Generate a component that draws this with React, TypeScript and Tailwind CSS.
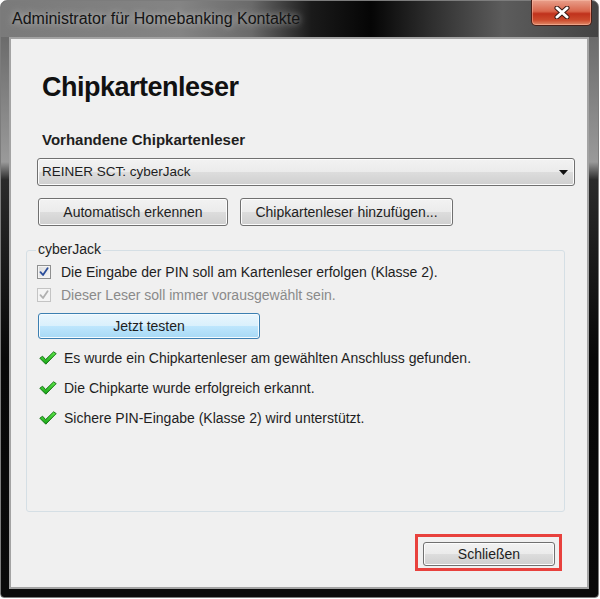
import React from 'react';

const btn =
  'flex items-center justify-center rounded-[3px] border border-[#707070] bg-[linear-gradient(180deg,#f2f2f2_0%,#ebebeb_50%,#dddddd_50%,#cfcfcf_100%)] shadow-[inset_0_0_0_1px_#fcfcfc] text-[14px] text-[#1e1e1e]';

const GreenCheck = () => (
  <svg width="18" height="14" viewBox="0 0 18 14" className="shrink-0">
    <defs>
      <linearGradient id="gc" x1="0" y1="0" x2="0" y2="1">
        <stop offset="0" stopColor="#5ee84a" />
        <stop offset="1" stopColor="#17a316" />
      </linearGradient>
    </defs>
    <path d="M0.8 7.2 L3.6 5.2 L6.6 8.6 L14.6 0.8 L17.2 2.6 L6.8 13.2 Z" fill="url(#gc)" stroke="#0c6a0c" strokeWidth="0.9" strokeLinejoin="round" />
  </svg>
);

const CheckBox = ({ disabled }: { disabled?: boolean }) => (
  <div
    className={
      'w-[14px] h-[14px] shrink-0 flex items-center justify-center border ' +
      (disabled
        ? 'border-[#c4c4c4] bg-[#f4f4f4]'
        : 'border-[#8e8f8f] bg-[linear-gradient(135deg,#dcdcdc_0%,#f6f6f6_100%)] shadow-[inset_0_0_0_1px_#f4f4f4]')
    }
  >
    <svg width="10" height="10" viewBox="0 0 10 10">
      <path
        d="M1.5 5.2 L4 8 L8.6 1.2"
        fill="none"
        stroke={disabled ? '#b0b0b0' : '#2a4d9a'}
        strokeWidth="1.8"
        strokeLinecap="round"
        strokeLinejoin="round"
      />
    </svg>
  </div>
);

const App = () => {
  return (
    <div className="w-[600px] h-[599px] bg-white font-['Liberation_Sans',Arial,sans-serif]">
      <div className="w-[599px] h-[598px] flex flex-col rounded-t-[7px] rounded-b-[4px] border border-[#7c7c7c] bg-[linear-gradient(180deg,#5e5e5e_0%,#9a9a9a_27%,#2a2a2a_30%,#080808_60%,#0a0a0a_100%)]">
        {/* title bar */}
        <div className="h-[36px] shrink-0 flex items-start justify-between rounded-t-[6px] bg-[linear-gradient(90deg,#7a7a7a_0%,#848484_30%,#6a6a6a_42%,#1a1a1a_52%,#050505_62%,#2e2e2e_72%,#5c5c5c_84%,#444444_100%)]">
          <div className="pl-[11px] pt-[9px] leading-[18px] text-[16px] text-[#141414] [text-shadow:0_0_7px_rgba(235,235,235,0.75)]">
            Administrator für Homebanking Kontakte
          </div>
          <div className="-mt-[1px] mr-[6px] w-[61px] h-[26px] flex items-center justify-center rounded-b-[5px] border border-t-0 border-[#4a2018] bg-[linear-gradient(180deg,#e9a08c_0%,#d9664c_45%,#c0321c_55%,#cc4a2c_80%,#e08a68_100%)] shadow-[inset_0_0_0_1px_rgba(255,200,180,0.45)]">
            <svg width="16" height="13" viewBox="0 0 16 13">
              <path d="M3 2 L13 11 M13 2 L3 11" stroke="#3a1a14" strokeWidth="5" strokeLinecap="round" />
              <path d="M3 2 L13 11 M13 2 L3 11" stroke="#ffffff" strokeWidth="3" strokeLinecap="round" />
            </svg>
          </div>
        </div>

        {/* client area */}
        <div className="flex-1 ml-[8px] mr-[9px] mb-[8px] border-2 border-[#a3a3a3] bg-[#f0f0f0] flex flex-col text-[#1e1e1e]">
          <h1 className="mt-[32px] ml-[31px] h-[32px] leading-[32px] text-[27px] font-bold tracking-[-0.5px] text-[#111]">
            Chipkartenleser
          </h1>
          <div className="mt-[28px] ml-[31px] leading-[18px] text-[15px] font-bold">
            Vorhandene Chipkartenleser
          </div>

          <div className="mt-[9px] ml-[26px] w-[538px] h-[28px] flex items-center justify-between rounded-[3px] border border-[#707070] bg-[linear-gradient(180deg,#f2f2f2_0%,#ebebeb_50%,#dddddd_50%,#cfcfcf_100%)] shadow-[inset_0_0_0_1px_#fcfcfc] pl-[4px] pr-[6px]">
            <span className="text-[13.5px] text-[#1e1e1e]">REINER SCT: cyberJack</span>
            <svg width="9" height="5" viewBox="0 0 9 5">
              <path d="M0 0 L9 0 L4.5 5 Z" fill="#111" />
            </svg>
          </div>

          <div className="mt-[12px] ml-[27px] flex gap-[12px]">
            <button className={btn + ' w-[190px] h-[28px]'}>Automatisch erkennen</button>
            <button className={btn + ' w-[213px] h-[28px]'}>Chipkartenleser hinzufügen...</button>
          </div>

          {/* group box */}
          <div className="relative mt-[24px] ml-[15px] w-[539px] h-[262px] rounded-[3px] border border-[#d5dfe5] flex flex-col">
            <div className="absolute -top-[10px] left-[9px] px-[2px] bg-[#f0f0f0] leading-[16px] text-[14px]">
              cyberJack
            </div>
            <div className="mt-[13px] ml-[10px] flex items-center gap-[10px] leading-[16px] text-[14px]">
              <CheckBox />
              <span>Die Eingabe der PIN soll am Kartenleser erfolgen (Klasse 2).</span>
            </div>
            <div className="mt-[7px] ml-[10px] flex items-center gap-[10px] leading-[16px] text-[14px] text-[#8a8a8a]">
              <CheckBox disabled />
              <span>Dieser Leser soll immer vorausgewählt sein.</span>
            </div>
            <button className="mt-[10px] ml-[11px] w-[222px] h-[26px] flex items-center justify-center rounded-[3px] border border-[#3c7fb1] bg-[linear-gradient(180deg,#eaf6fd_0%,#d9f0fc_50%,#bee6fd_50%,#a7d9f5_100%)] shadow-[inset_0_0_0_1px_#f4fbff] text-[14px] text-[#1e1e1e]">
              Jetzt testen
            </button>
            <div className="mt-[11px] ml-[12px] flex items-center gap-[7px] leading-[16px] text-[14px]">
              <GreenCheck />
              <span>Es wurde ein Chipkartenleser am gewählten Anschluss gefunden.</span>
            </div>
            <div className="mt-[14px] ml-[12px] flex items-center gap-[7px] leading-[16px] text-[14px]">
              <GreenCheck />
              <span>Die Chipkarte wurde erfolgreich erkannt.</span>
            </div>
            <div className="mt-[14px] ml-[12px] flex items-center gap-[7px] leading-[16px] text-[14px]">
              <GreenCheck />
              <span>Sichere PIN-Eingabe (Klasse 2) wird unterstützt.</span>
            </div>
          </div>

          <div className="mt-[22px] mr-[25px] flex justify-end">
            <div className="border-[3px] border-[#e8413d] pt-[5px] pb-[2px] pl-[5px] pr-[4px]">
              <button className={btn + ' w-[132px] h-[24px]'}>Schließen</button>
            </div>
          </div>
        </div>
      </div>
    </div>
  );
};

export default App;
